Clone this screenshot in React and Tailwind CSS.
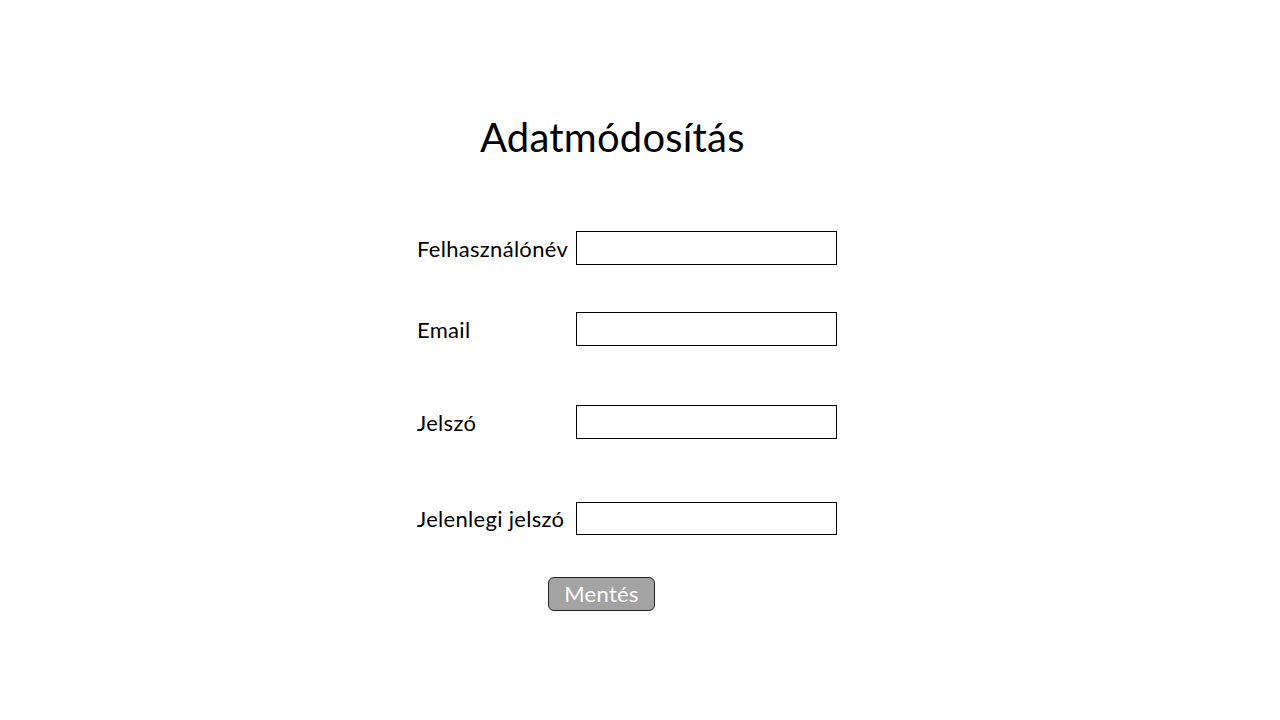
export default function App() {
  const font = { fontFamily: '"Lato", "Liberation Sans", sans-serif' };
  const rows = [
    { label: "Felhasználónév", mt: "mt-0", h: "h-[34px]" },
    { label: "Email", mt: "mt-[47px]", h: "h-[34px]" },
    { label: "Jelszó", mt: "mt-[59px]", h: "h-[34px]" },
    { label: "Jelenlegi jelszó", mt: "mt-[63px]", h: "h-[33px]" },
  ];
  return (
    <div className="w-[1280px] h-[720px] bg-white text-black" style={font}>
      <div className="pt-[112px] flex flex-col">
        <h1 className="ml-[480px] text-[40px] leading-[50px] font-normal tracking-[0.2px]">Adatmódosítás</h1>
        <div className="mt-[69px] ml-[417px] flex flex-col">
          {rows.map((r, i) => (
            <div key={i} className={`flex items-center ${r.mt}`}>
              <span className="w-[159px] text-[22px] tracking-[0.3px] leading-[33px]">{r.label}</span>
              <div className={`w-[261px] ${r.h} border border-black bg-white`} />
            </div>
          ))}
          <button className="mt-[42px] ml-[131px] w-[107px] h-[34px] rounded-[6px] border border-[#222] bg-[#a3a3a3] text-white text-[22px] tracking-[0.3px] leading-[30px] flex items-center justify-center">
            Mentés
          </button>
        </div>
      </div>
    </div>
  );
}
